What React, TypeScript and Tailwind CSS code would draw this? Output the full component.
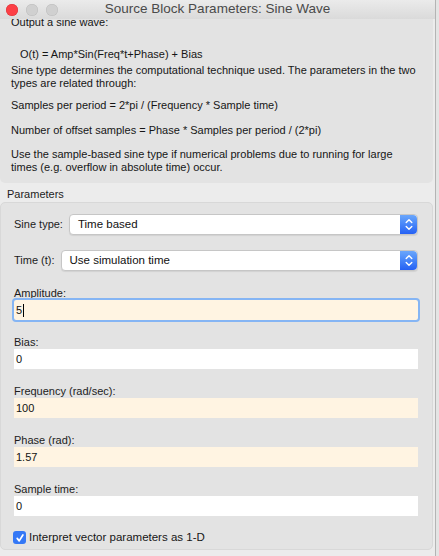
const FONT = { fontFamily: '"Liberation Sans", Arial, sans-serif' };

function Stepper() {
  return (
    <div className="flex h-full w-[17px] items-center justify-center rounded-r-[4px] bg-gradient-to-b from-[#6aa6fb] to-[#2660f4]">
      <svg width="8" height="13" viewBox="0 0 8 13" fill="none" stroke="white" strokeWidth="1.4" strokeLinecap="round" strokeLinejoin="round">
        <path d="M1.2 4.6 L4 1.8 L6.8 4.6" />
        <path d="M1.2 8.4 L4 11.2 L6.8 8.4" />
      </svg>
    </div>
  );
}

function SelectRow({ label, value, gap }: { label: string; value: string; gap: string }) {
  return (
    <div className="flex items-center">
      <span className={`pl-[13px] ${gap} text-[11px] text-[#1c1c1c]`}>{label}</span>
      <div className="flex h-[21px] flex-1 items-center rounded-[4px] border border-[#c6c6c6] bg-white shadow-[0_1px_1px_rgba(0,0,0,0.08)]">
        <span className="flex-1 pl-[8px] text-[11.5px] text-[#111]">{value}</span>
        <Stepper />
      </div>
    </div>
  );
}

function Field({ label, value, tint, focused }: { label: string; value: string; tint?: boolean; focused?: boolean }) {
  return (
    <div className="flex flex-col">
      <span className="h-[14px] text-[11px] leading-[14px] text-[#1c1c1c]">{label}</span>
      <div
        className={`flex h-[20px] items-center pl-[2px] text-[11px] text-[#111] ${tint ? "bg-[#fff4e2]" : "bg-white"} ${
          focused ? "rounded-[2px] outline-[2.5px] outline-[#85b5f4]" : ""
        }`}
      >
        {value}
        {focused && <span className="ml-[1px] h-[13px] w-[1px] bg-black" />}
      </div>
    </div>
  );
}

export default function App() {
  return (
    <div className="flex h-[556px] w-[439px] overflow-hidden bg-[#e4e4e4]" style={FONT}>
      <div className="flex w-[436px] flex-col border-r border-[#b4b4b4] bg-[#ececec]">
        {/* title bar */}
        <div className="relative flex h-[19px] shrink-0 items-center justify-center bg-gradient-to-b from-[#ebebeb] to-[#dadada]">
          <div className="absolute left-[6px] top-[4px] flex gap-[8px]">
            <span className="h-[12px] w-[12px] rounded-full bg-[#fc3f45] shadow-[inset_0_0_0_0.5px_#d8343a]" />
            <span className="h-[12px] w-[12px] rounded-full bg-[#d0d0d0] shadow-[inset_0_0_0_0.5px_#bcbcbc]" />
            <span className="h-[12px] w-[12px] rounded-full bg-[#d0d0d0] shadow-[inset_0_0_0_0.5px_#bcbcbc]" />
          </div>
          <span className="text-[13.5px] text-[#4a4a4a]">Source Block Parameters: Sine Wave</span>
        </div>

        {/* block description, scrolled slightly */}
        <div className="mr-[2px] h-[164px] shrink-0 overflow-hidden rounded-b-[5px] bg-[#e3e3e3] pl-[11px] text-[11px] leading-[13px] whitespace-nowrap text-[#161616]">
          <div className="-mt-[3px]">
            <p>Output a sine wave:</p>
            <p className="mt-[19px] pl-[9px]">O(t) = Amp*Sin(Freq*t+Phase) + Bias</p>
            <p className="mt-[3px]">
              Sine type determines the computational technique used. The parameters in the two
              <br />
              types are related through:
            </p>
            <p className="mt-[9px]">Samples per period = 2*pi / (Frequency * Sample time)</p>
            <p className="mt-[12px]">Number of offset samples = Phase * Samples per period / (2*pi)</p>
            <p className="mt-[11px]">
              Use the sample-based sine type if numerical problems due to running for large
              <br />
              times (e.g. overflow in absolute time) occur.
            </p>
          </div>
        </div>

        <div className="h-[19px] pl-[7px] pt-[5px] text-[11px] leading-[13px] text-[#1c1c1c]">Parameters</div>

        {/* parameter group */}
        <div className="mr-[2px] flex h-[348px] flex-col rounded-[5px] border border-[#d8d8d8] bg-[#e3e3e3] pr-[14px]">
          <div className="flex flex-col gap-[15px] pt-[11px]">
            <SelectRow label="Sine type:" value="Time based" gap="pr-[6px]" />
            <SelectRow label="Time (t):" value="Use simulation time" gap="pr-[6px]" />
          </div>
          <div className="flex flex-col gap-[15px] pl-[13px] pt-[15px]">
            <Field label="Amplitude:" value="5" tint focused />
            <Field label="Bias:" value="0" />
            <Field label="Frequency (rad/sec):" value="100" tint />
            <Field label="Phase (rad):" value="1.57" tint />
            <Field label="Sample time:" value="0" />
          </div>
          <label className="flex items-center gap-[3px] pl-[12px] pt-[13px] text-[11.5px] text-[#161616]">
            <span className="flex h-[13px] w-[13px] items-center justify-center rounded-[3px] bg-[#3478f6]">
              <svg width="10" height="10" viewBox="0 0 10 10" fill="none" stroke="white" strokeWidth="1.7" strokeLinecap="round" strokeLinejoin="round">
                <path d="M2.2 5.4 L4.2 7.9 L7.9 2" />
              </svg>
            </span>
            Interpret vector parameters as 1-D
          </label>
        </div>
      </div>
    </div>
  );
}
